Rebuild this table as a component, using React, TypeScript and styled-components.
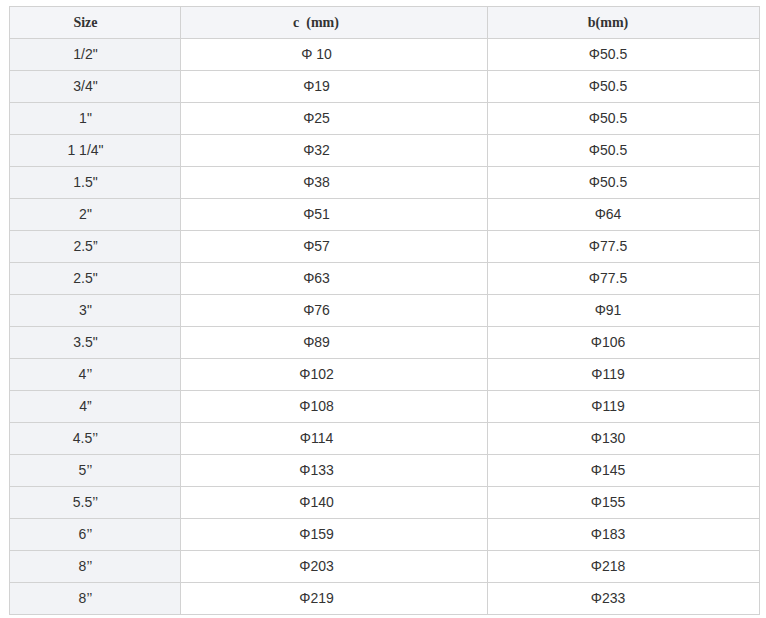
import React from "react";
import styled, { createGlobalStyle } from "styled-components";

const Global = createGlobalStyle`
  html, body { margin: 0; padding: 0; background: #ffffff; }
  body { font-family: "Liberation Sans", Arial, sans-serif; }
`;

const Page = styled.div`
  padding: 6px 0 0 9px;
`;

const Table = styled.table`
  border-collapse: collapse;
  table-layout: fixed;
  width: 750px;
  font-family: "Liberation Sans", Arial, sans-serif;
  font-size: 14px;
  color: #333333;
`;

const Col = styled.col<{ $w: number }>`
  width: ${(p) => p.$w}px;
`;

const Row = styled.tr`
  height: 32px;
`;

const HeadCell = styled.th<{ $pr: number }>`
  border: 1px solid #d2d2d2;
  background: #f4f5f8;
  font-family: "Liberation Serif", "Times New Roman", serif;
  font-weight: bold;
  font-size: 14px;
  color: #333333;
  text-align: center;
  padding: 0 ${(p) => p.$pr}px 0 0;
  height: 31px;
  white-space: pre;
`;

const Cell = styled.td<{ $pr: number; $shade?: boolean }>`
  border: 1px solid #d2d2d2;
  background: ${(p) => (p.$shade ? "#f2f3f6" : "#ffffff")};
  text-align: center;
  padding: 0 ${(p) => p.$pr}px 1px 0;
  height: 30px;
  white-space: pre;
`;

const rows: [string, string, string][] = [
  ['1/2"', "Φ 10", "Φ50.5"],
  ['3/4"', "Φ19", "Φ50.5"],
  ['1"', "Φ25", "Φ50.5"],
  ['1 1/4"', "Φ32", "Φ50.5"],
  ['1.5"', "Φ38", "Φ50.5"],
  ['2"', "Φ51", "Φ64"],
  ["2.5\u201d", "Φ57", "Φ77.5"],
  ['2.5"', "Φ63", "Φ77.5"],
  ['3"', "Φ76", "Φ91"],
  ['3.5"', "Φ89", "Φ106"],
  ["4\u2019\u2019", "Φ102", "Φ119"],
  ["4\u201d", "Φ108", "Φ119"],
  ["4.5\u2019\u2019", "Φ114", "Φ130"],
  ["5\u2019\u2019", "Φ133", "Φ145"],
  ["5.5\u2019\u2019", "Φ140", "Φ155"],
  ["6\u2019\u2019", "Φ159", "Φ183"],
  ["8\u2019\u2019", "Φ203", "Φ218"],
  ["8\u2019\u2019", "Φ219", "Φ233"],
];

export default function App() {
  return (
    <>
      <Global />
      <Page>
        <Table>
          <colgroup>
            <Col $w={171} />
            <Col $w={307} />
            <Col $w={272} />
          </colgroup>
          <thead>
            <Row>
              <HeadCell $pr={19}>Size</HeadCell>
              <HeadCell $pr={36}>{"c\u00a0\u00a0(mm)"}</HeadCell>
              <HeadCell $pr={31}>b(mm)</HeadCell>
            </Row>
          </thead>
          <tbody>
            {rows.map((r, i) => (
              <Row key={i}>
                <Cell $pr={19} $shade>
                  {r[0]}
                </Cell>
                <Cell $pr={35}>{r[1]}</Cell>
                <Cell $pr={31}>{r[2]}</Cell>
              </Row>
            ))}
          </tbody>
        </Table>
      </Page>
    </>
  );
}
